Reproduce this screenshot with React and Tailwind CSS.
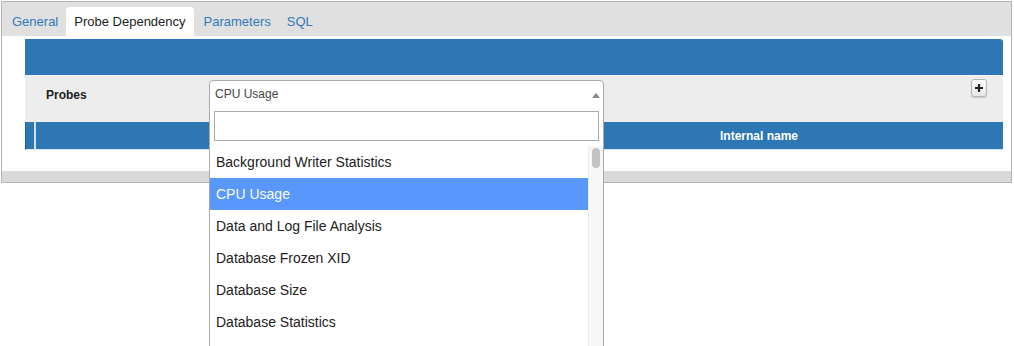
import React from "react";

const items = [
  "Background Writer Statistics",
  "CPU Usage",
  "Data and Log File Analysis",
  "Database Frozen XID",
  "Database Size",
  "Database Statistics",
];

export default function App() {
  return (
    <div
      className="relative w-[1014px] h-[346px] bg-white overflow-hidden"
      style={{ fontFamily: '"Liberation Sans", Arial, sans-serif' }}
    >
      <div className="ml-[1px] mt-[1px] w-[1011px] h-[182px] border border-[#b3b3b3] flex flex-col">
        {/* Tab bar */}
        <div className="h-[34px] bg-[#e0e0e0] flex items-end pl-[2px] text-[13px]">
          <div className="h-[29px] px-2 flex items-center text-[#337ab7]">General</div>
          <div className="h-[29px] px-2 flex items-center bg-white rounded-t-[4px] text-[#222]">
            Probe Dependency
          </div>
          <div className="h-[29px] px-2 ml-[2px] flex items-center text-[#337ab7]">Parameters</div>
          <div className="h-[29px] px-2 flex items-center text-[#337ab7]">SQL</div>
        </div>
        {/* Content */}
        <div className="flex-1 bg-white pl-[23px] pr-[8px] pt-[3px]">
          <div className="h-[36px] bg-[#2d77b4] rounded-tr-[3px]"></div>
          <div className="h-[47px] bg-[#ededed] border-t border-[#f4f4f4] flex items-start">
            <div className="w-[184px] pl-[21px] pt-[10px] text-[12px] font-bold text-[#222]">Probes</div>
            <div className="mt-[4px] w-[395px] h-[28px] border border-[#aaa] rounded-t-[4px] bg-white flex items-center pl-[5px] text-[12px] text-[#444]">
              CPU Usage
            </div>
            <div className="flex-1"></div>
            <div className="mt-[3px] mr-[16px] w-[16px] h-[18px] rounded-[3px] border border-[#b5b5b5] bg-gradient-to-b from-white to-[#e6e6e6] flex items-center justify-center shadow-[0_1px_1px_rgba(0,0,0,0.15)]">
              <svg width="10" height="10" viewBox="0 0 10 10">
                <path d="M5 1v8M1 5h8" stroke="#222" strokeWidth="2.2" />
              </svg>
            </div>
          </div>
          <div className="h-[28px] bg-[#2d77b4] flex border-l border-[#1f5f96] border-b border-b-[#dde6ee]">
            <div className="w-[10px] border-r-2 border-[#d6dfe8]"></div>
            <div className="w-[479px]"></div>
            <div className="flex-1 flex items-center justify-center text-white text-[12px] font-bold">
              Internal name
            </div>
          </div>
        </div>
        <div className="h-[11px] bg-[#d9d9d9]"></div>
      </div>

      {/* Select arrow */}
      <div className="absolute left-[592px] top-[93px] w-0 h-0 border-l-[4px] border-r-[4px] border-b-[5px] border-l-transparent border-r-transparent border-b-[#888]"></div>

      {/* Dropdown */}
      <div className="absolute left-[209px] top-[107px] w-[395px] h-[260px] bg-white border border-[#aaa] border-t-0">
        <div className="px-[4px] pt-[4px]">
          <div className="h-[30px] border border-[#aaa] bg-white"></div>
        </div>
        <div className="mt-[5px] flex">
          <div className="flex-1">
            {items.map((it) => (
              <div
                key={it}
                className={
                  "h-[32px] flex items-center pl-[6px] text-[14px] " +
                  (it === "CPU Usage" ? "bg-[#5897fb] text-white" : "text-[#222]")
                }
              >
                {it}
              </div>
            ))}
            <div className="h-[32px]"></div>
          </div>
          <div className="w-[15px] bg-[#f7f7f7] border-l border-[#ececec] pt-[2px] flex justify-center">
            <div className="w-[8px] h-[20px] rounded-full bg-[#c2c2c2]"></div>
          </div>
        </div>
      </div>
    </div>
  );
}
